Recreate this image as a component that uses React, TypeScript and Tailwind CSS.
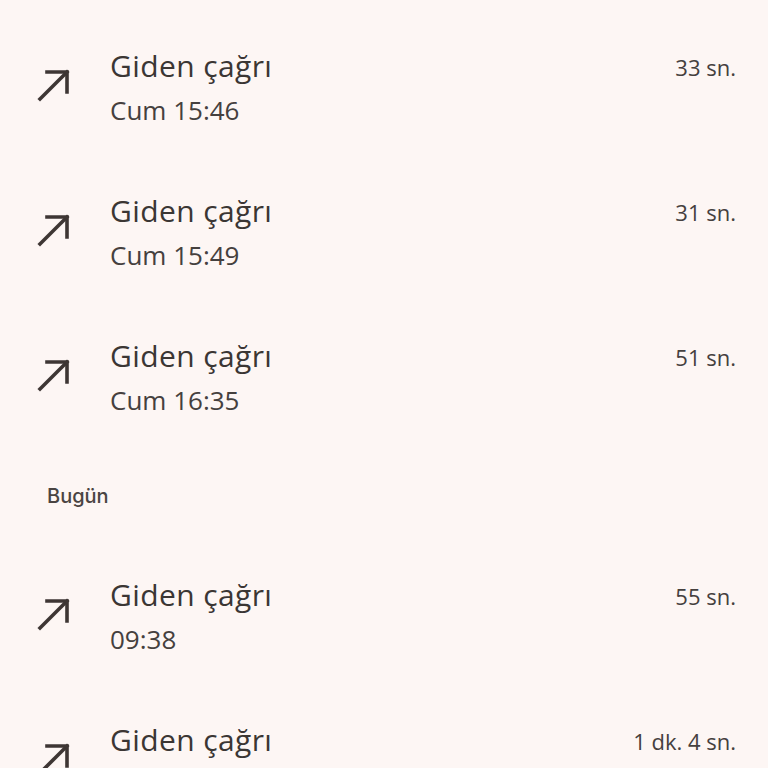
import type { ReactNode } from 'react'

type Call = { time?: string; duration: string }

const earlier: Call[] = [
  { time: 'Cum 15:46', duration: '33 sn.' },
  { time: 'Cum 15:49', duration: '31 sn.' },
  { time: 'Cum 16:35', duration: '51 sn.' },
]

// last row is cut by the bottom edge, its time line is off screen
const today: Call[] = [
  { time: '09:38', duration: '55 sn.' },
  { duration: '1 dk. 4 sn.' },
]

function OutgoingArrow() {
  return (
    <svg width="48" height="48" viewBox="0 0 48 48" fill="none" className="shrink-0">
      <path d="M9 38 L36 11" stroke="#3e3634" strokeWidth="3.6" strokeLinecap="square" />
      <path d="M16 11 H36 V31" stroke="#3e3634" strokeWidth="3.6" strokeLinecap="square" />
    </svg>
  )
}

function CallRow({ call }: { call: Call }) {
  return (
    <div className="flex h-[145px] items-center pl-[31px] pr-[32px]">
      <div className="w-[79px] pb-[6px]">
        <OutgoingArrow />
      </div>
      <div className="flex flex-1 flex-col">
        <div className="flex items-center justify-between">
          <span className="text-[30px] leading-[40px] tracking-[0.4px] text-[#3b3634]">Giden çağrı</span>
          <span className="pt-[3px] text-[22px] leading-[28px] text-[#45403e]">{call.duration}</span>
        </div>
        <span className="h-[44px] pt-[2px] text-[26px] leading-[44px] text-[#45403e]">{call.time}</span>
      </div>
    </div>
  )
}

function Section({ label, children }: { label?: string; children: ReactNode }) {
  return (
    <div>
      {label && (
        <div className="flex h-[94px] items-center pl-[47px] pb-[2px]">
          <span className="font-['Inter',sans-serif] text-[20px] font-medium text-[#4a4442]">{label}</span>
        </div>
      )}
      {children}
    </div>
  )
}

export default function App() {
  return (
    <div
      className="h-[768px] w-[768px] overflow-hidden bg-[#fdf6f4] pt-[15px]"
      style={{ fontFamily: '"Open Sans", "Noto Sans", sans-serif' }}
    >
      <Section>
        {earlier.map((c) => (
          <CallRow key={c.duration} call={c} />
        ))}
      </Section>
      <Section label="Bugün">
        {today.map((c) => (
          <CallRow key={c.duration} call={c} />
        ))}
      </Section>
    </div>
  )
}
